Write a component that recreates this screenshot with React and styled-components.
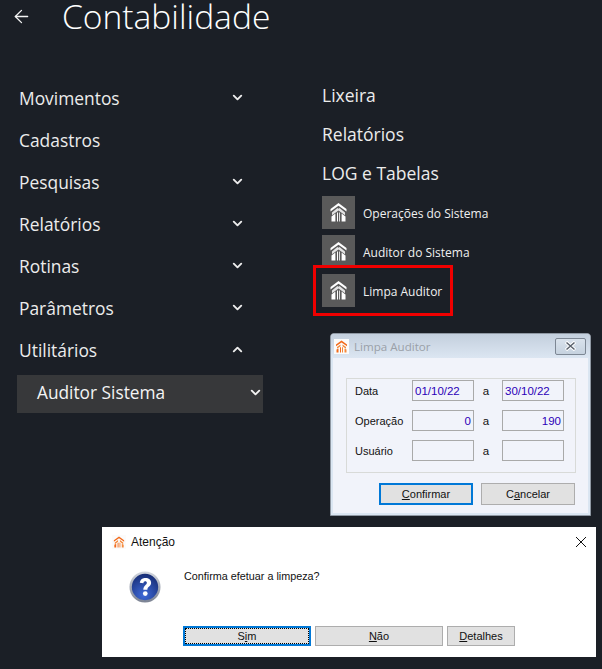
import React from "react";
import styled, { createGlobalStyle } from "styled-components";
import { FiArrowLeft, FiChevronDown, FiChevronUp } from "react-icons/fi";

const GlobalStyle = createGlobalStyle`
  html, body {
    margin: 0;
    background: #1b1f26;
  }
  body {
    font-family: "Open Sans", "Noto Sans", sans-serif;
    color: #f2f2f2;
  }
`;

const menu = [
  { label: "Movimentos", icon: "down" },
  { label: "Cadastros" },
  { label: "Pesquisas", icon: "down" },
  { label: "Relatórios", icon: "down" },
  { label: "Rotinas", icon: "down" },
  { label: "Parâmetros", icon: "down" },
  { label: "Utilitários", icon: "up" },
];

const sections = ["Lixeira", "Relatórios", "LOG e Tabelas"];

const tiles = [
  { label: "Operações do Sistema" },
  { label: "Auditor do Sistema" },
  { label: "Limpa Auditor", marked: true },
];

// roof made of two chevrons crossing over striped walls
const HouseIcon = () => (
  <svg width="17" height="19" viewBox="0 0 17 19">
    <path d="M0.5 6 L8.5 0 L16.5 6 L16.5 8.6 L8.5 2.8 L0.5 8.6 Z" fill="#fff" />
    <path d="M2 9.5 L7.4 5 L8.5 5.8 L9.6 5 L15 9.5 L15 12.3 L8.5 7.4 L2 12.3 Z" fill="#e4e4e4" />
    <path d="M1.5 13.5 L5.4 10.6 L5.4 18.5 L1.5 18.5 Z" fill="#fff" />
    <path d="M7 9.8 L8 9.2 L8 18.5 L7 18.5 Z" fill="#fff" />
    <path d="M9.2 9.2 L10 9.8 L10 18.5 L9.2 18.5 Z" fill="#fff" />
    <path d="M11.6 10.6 L15.5 13.5 L15.5 18.5 L11.6 18.5 Z" fill="#fff" />
  </svg>
);

const AppLogo = ({ size = 12 }) => (
  <svg width={size} height={size} viewBox="0 0 15 15">
    <rect width="15" height="15" fill="#fbfbfb" />
    <path d="M2 5.5 L7.5 1.5 L13 5.5 L13 7.2 L7.5 3.4 L2 7.2 Z" fill="#f26a1b" />
    <path d="M3 8 L6.5 5.4 L6.5 7.2 L3 9.8 Z M12 8 L8.5 5.4 L8.5 7.2 L12 9.8 Z" fill="#f58a3c" />
    <path d="M2.5 10.5 L4.5 9.5 L4.5 13.5 L2.5 13.5 Z M6 8.5 L7 8 L7 13.5 L6 13.5 Z" fill="#f26a1b" />
    <path d="M8 8 L9 8.5 L9 13.5 L8 13.5 Z M10.5 9.5 L12.5 10.5 L12.5 13.5 L10.5 13.5 Z" fill="#f58a3c" />
  </svg>
);

const QuestionIcon = () => (
  <svg width="32" height="32" viewBox="0 0 34 34">
    <defs>
      <linearGradient id="ring" x1="0" y1="0" x2="0" y2="1">
        <stop offset="0" stopColor="#d3d7df" />
        <stop offset="1" stopColor="#7b8292" />
      </linearGradient>
      <radialGradient id="ball" cx="0.45" cy="0.8" r="0.85">
        <stop offset="0" stopColor="#3f6ad8" />
        <stop offset="1" stopColor="#15296f" />
      </radialGradient>
    </defs>
    <circle cx="17" cy="17" r="16.5" fill="url(#ring)" />
    <circle cx="17" cy="17" r="14" fill="url(#ball)" />
    <path
      d="M11.5 12.5 C12 8.5 15 7.5 17.5 7.5 C21 7.5 23.5 9.5 23.5 12.5 C23.5 16.5 19.5 16.5 19.5 20 L15.2 20 C15.2 15.5 19 15 19 12.6 C19 11.4 18.2 10.8 17.2 10.8 C16 10.8 15.4 11.6 15.3 13 Z"
      fill="#fff"
    />
    <circle cx="17.3" cy="24" r="2.5" fill="#fff" />
  </svg>
);

const Page = styled.div`
  position: relative;
  width: 602px;
  height: 669px;
`;

const Header = styled.header`
  display: flex;
  align-items: center;
  height: 34px;
  padding-left: 11px;
  svg {
    font-size: 21px;
    stroke-width: 1.5;
    color: #f4f4f4;
    margin-top: -2px;
  }
`;

const Title = styled.h1`
  margin: -3px 0 0 30px;
  font-size: 33.6px;
  font-weight: 300;
  line-height: 34px;
  color: #fff;
`;

const Columns = styled.div`
  display: grid;
  grid-template-columns: 322px 1fr;
  padding-top: 43px;
`;

const Nav = styled.nav`
  display: flex;
  flex-direction: column;
  padding-left: 19px;
`;

const NavItem = styled.div`
  display: flex;
  align-items: center;
  justify-content: space-between;
  width: 226px;
  height: 42px;
  font-size: 17.4px;
  font-weight: 400;
  color: #ececec;
  svg {
    font-size: 15px;
    stroke-width: 3;
    margin-bottom: 2px;
  }
`;

const SubItem = styled.div`
  display: flex;
  align-items: center;
  justify-content: space-between;
  box-sizing: border-box;
  width: 246px;
  height: 38px;
  margin: 4px 0 0 -2px;
  padding: 0 0 3px 20px;
  background: #37383a;
  font-size: 17.3px;
  color: #f4f4f4;
  svg {
    font-size: 15px;
    stroke-width: 3;
  }
`;

const Side = styled.section`
  display: flex;
  flex-direction: column;
  margin-top: -2px;
`;

const SectionTitle = styled.div`
  display: flex;
  align-items: center;
  height: 39px;
  font-size: 17.5px;
  color: #ececec;
`;

const TileList = styled.div`
  display: flex;
  flex-direction: column;
  gap: 6px;
  margin-top: 4px;
`;

const Tile = styled.div`
  position: relative;
  display: flex;
  align-items: center;
  gap: 8px;
  height: 33px;
  font-size: 12px;
  color: #f0f0f0;
  ${(p) =>
    p.$marked &&
    `
    &::after {
      content: "";
      position: absolute;
      left: -9px;
      top: -9px;
      width: 140px;
      height: 51px;
      box-sizing: border-box;
      border: 3px solid #f00000;
    }
  `}
`;

const TileIcon = styled.span`
  display: flex;
  align-items: center;
  justify-content: center;
  width: 33px;
  height: 33px;
  background: #5a5a5a;
`;

const TileLabel = styled.span`
  margin-top: 2px;
`;

const FormWindow = styled.div`
  position: absolute;
  left: 330px;
  top: 333px;
  width: 261px;
  height: 183px;
  box-sizing: border-box;
  display: flex;
  flex-direction: column;
  border: 1px solid #8f98a3;
  border-radius: 4px 4px 0 0;
  background: #f1f3fa;
  box-shadow: inset 0 0 0 2px #dbe6f2;
  font-family: "Liberation Sans", sans-serif;
  font-size: 11px;
  color: #111;
`;

const FormTitleBar = styled.div`
  display: flex;
  align-items: center;
  gap: 5px;
  height: 24px;
  padding: 0 4px 0 3px;
  background: linear-gradient(#c3cfdd, #dce6f2);
  border-radius: 3px 3px 0 0;
  font-family: "Open Sans", sans-serif;
  font-size: 11.6px;
  color: #9aa0a8;
`;

const TitleText = styled.span`
  flex: 1;
`;

const CloseButton = styled.span`
  display: flex;
  align-items: center;
  justify-content: center;
  box-sizing: border-box;
  width: 31px;
  height: 17px;
  border: 1px solid #7d8794;
  border-radius: 2px;
  background: linear-gradient(#d9e2ec, #c6d2df);
`;

const FieldBox = styled.div`
  display: grid;
  grid-template-columns: 57px 62px 28px 62px;
  grid-auto-rows: 21px;
  row-gap: 9px;
  align-items: center;
  box-sizing: border-box;
  margin: 20px 14px 0 15px;
  height: 95px;
  padding: 1px 0 0 8px;
  border: 1px solid #d8dad8;
`;

const Field = styled.span`
  box-sizing: border-box;
  height: 21px;
  line-height: 20px;
  padding: 0 2px;
  border: 1px solid #a9a9a9;
  font-size: 11.5px;
  color: #2b00b8;
  text-align: ${(p) => (p.$right ? "right" : "left")};
`;

const Between = styled.span`
  padding-right: 4px;
  font-size: 11.5px;
  text-align: center;
`;

const FormActions = styled.div`
  display: flex;
  justify-content: flex-end;
  gap: 8px;
  margin: 10px 15px 0 0;
`;

const Button = styled.button`
  display: block;
  box-sizing: border-box;
  width: ${(p) => p.$w}px;
  height: ${(p) => p.$h}px;
  padding: 0;
  border: ${(p) => (p.$focus ? "2px solid #0078d7" : "1px solid #adadad")};
  border-radius: 0;
  background: #e1e1e1;
  font-family: "Liberation Sans", sans-serif;
  font-size: 11px;
  color: #111;
  u {
    text-underline-offset: 1px;
  }
`;

const DottedLabel = styled.span`
  display: block;
  height: 100%;
  line-height: 14px;
  box-sizing: border-box;
  border: 1px dotted #000;
`;

const AlertWindow = styled.div`
  position: absolute;
  left: 102px;
  top: 527px;
  width: 494px;
  height: 130px;
  background: #fff;
  font-family: "Liberation Sans", sans-serif;
  color: #111;
`;

const AlertTitleBar = styled.div`
  display: flex;
  align-items: center;
  gap: 5px;
  height: 30px;
  padding: 0 9px 0 10px;
  font-size: 12px;
`;

const AlertBody = styled.div`
  display: flex;
  height: 69px;
  padding-left: 27px;
  font-size: 10.8px;
`;

const Message = styled.p`
  margin: 13px 0 0 23px;
`;

const AlertActions = styled.div`
  display: flex;
  gap: 4px;
  padding-left: 81px;
`;

const IconSlot = styled.div`
  margin-top: 14px;
`;

const App = () => (
  <>
    <GlobalStyle />
    <Page>
      <Header>
        <FiArrowLeft />
        <Title>Contabilidade</Title>
      </Header>
      <Columns>
        <Nav>
          {menu.map((item) => (
            <NavItem key={item.label}>
              {item.label}
              {item.icon === "down" && <FiChevronDown />}
              {item.icon === "up" && <FiChevronUp />}
            </NavItem>
          ))}
          <SubItem>
            Auditor Sistema
            <FiChevronDown />
          </SubItem>
        </Nav>
        <Side>
          {sections.map((s) => (
            <SectionTitle key={s}>{s}</SectionTitle>
          ))}
          <TileList>
            {tiles.map((t) => (
              <Tile key={t.label} $marked={t.marked}>
                <TileIcon>
                  <HouseIcon />
                </TileIcon>
                <TileLabel>{t.label}</TileLabel>
              </Tile>
            ))}
          </TileList>
        </Side>
      </Columns>

      <FormWindow>
        <FormTitleBar>
          <AppLogo size={15} />
          <TitleText>Limpa Auditor</TitleText>
          <CloseButton>
            <svg width="13" height="10" viewBox="0 0 13 10">
              <path d="M2 1 L11 9 M11 1 L2 9" stroke="#fff" strokeWidth="3.4" />
              <path d="M2.5 1.5 L10.5 8.5 M10.5 1.5 L2.5 8.5" stroke="#5a626d" strokeWidth="1.5" />
            </svg>
          </CloseButton>
        </FormTitleBar>
        <FieldBox>
          <span>Data</span>
          <Field>01/10/22</Field>
          <Between>a</Between>
          <Field>30/10/22</Field>
          <span>Operação</span>
          <Field $right>0</Field>
          <Between>a</Between>
          <Field $right>190</Field>
          <span>Usuário</span>
          <Field />
          <Between>a</Between>
          <Field />
        </FieldBox>
        <FormActions>
          <Button $w={94} $h={22} $focus>
            <u>C</u>onfirmar
          </Button>
          <Button $w={94} $h={22}>
            C<u>a</u>ncelar
          </Button>
        </FormActions>
      </FormWindow>

      <AlertWindow>
        <AlertTitleBar>
          <AppLogo size={14} />
          <TitleText>Atenção</TitleText>
          <svg width="12" height="12" viewBox="0 0 12 12">
            <path d="M1 1 L11 11 M11 1 L1 11" stroke="#111" strokeWidth="1" />
          </svg>
        </AlertTitleBar>
        <AlertBody>
          <IconSlot>
            <QuestionIcon />
          </IconSlot>
          <Message>Confirma efetuar a limpeza?</Message>
        </AlertBody>
        <AlertActions>
          <Button $w={128} $h={20} $focus>
            <DottedLabel>
              S<u>i</u>m
            </DottedLabel>
          </Button>
          <Button $w={128} $h={20}>
            <u>N</u>ão
          </Button>
          <Button $w={68} $h={20}>
            <u>D</u>etalhes
          </Button>
        </AlertActions>
      </AlertWindow>
    </Page>
  </>
);

export default App;
